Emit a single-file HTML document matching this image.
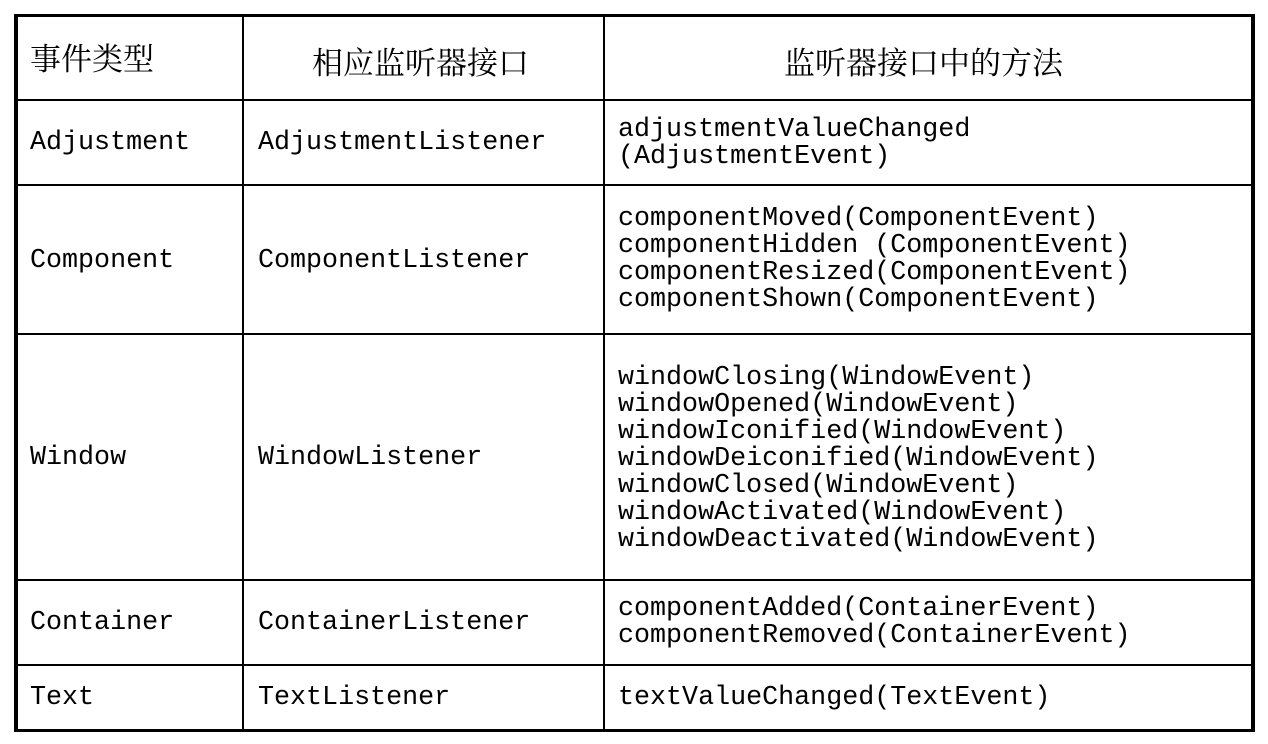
<!DOCTYPE html><html><head><meta charset="utf-8"><style>
body{margin:0;background:#fff;width:1268px;height:744px;position:relative;overflow:hidden}
.b{position:absolute;background:#000}
.t{position:absolute;font-family:"Liberation Mono",monospace;font-size:26.7px;line-height:27px;white-space:pre;color:#000}
.h{position:absolute;font-family:"Noto Serif CJK SC","Noto Sans CJK SC",serif;font-size:31px;line-height:36px;white-space:pre;color:#000}
</style></head><body>
<div class="b" style="left:14px;top:14px;width:1241px;height:3px"></div>
<div class="b" style="left:14px;top:729px;width:1241px;height:3px"></div>
<div class="b" style="left:14px;top:14px;width:4px;height:718px"></div>
<div class="b" style="left:1251px;top:14px;width:4px;height:718px"></div>
<div class="b" style="left:242px;top:14px;width:2px;height:718px"></div>
<div class="b" style="left:603px;top:14px;width:2px;height:718px"></div>
<div class="b" style="left:14px;top:99px;width:1241px;height:2px"></div>
<div class="b" style="left:14px;top:184px;width:1241px;height:2px"></div>
<div class="b" style="left:14px;top:333px;width:1241px;height:2px"></div>
<div class="b" style="left:14px;top:579px;width:1241px;height:2px"></div>
<div class="b" style="left:14px;top:664px;width:1241px;height:2px"></div>
<div class="h" style="left:30px;top:39px">事件类型</div>
<div class="h" style="left:312px;top:43px">相应监听器接口</div>
<div class="h" style="left:784px;top:43px">监听器接口中的方法</div>
<div class="t" style="left:30px;top:130px">Adjustment</div>
<div class="t" style="left:258px;top:130px">AdjustmentListener</div>
<div class="t" style="left:618px;top:117px">adjustmentValueChanged
(AdjustmentEvent)</div>
<div class="t" style="left:30px;top:248px">Component</div>
<div class="t" style="left:258px;top:248px">ComponentListener</div>
<div class="t" style="left:618px;top:206px">componentMoved(ComponentEvent)
componentHidden (ComponentEvent)
componentResized(ComponentEvent)
componentShown(ComponentEvent)</div>
<div class="t" style="left:30px;top:445px">Window</div>
<div class="t" style="left:258px;top:445px">WindowListener</div>
<div class="t" style="left:618px;top:365px">windowClosing(WindowEvent)
windowOpened(WindowEvent)
windowIconified(WindowEvent)
windowDeiconified(WindowEvent)
windowClosed(WindowEvent)
windowActivated(WindowEvent)
windowDeactivated(WindowEvent)</div>
<div class="t" style="left:30px;top:610px">Container</div>
<div class="t" style="left:258px;top:610px">ContainerListener</div>
<div class="t" style="left:618px;top:596px">componentAdded(ContainerEvent)
componentRemoved(ContainerEvent)</div>
<div class="t" style="left:30px;top:685px">Text</div>
<div class="t" style="left:258px;top:685px">TextListener</div>
<div class="t" style="left:618px;top:685px">textValueChanged(TextEvent)</div>
</body></html>
